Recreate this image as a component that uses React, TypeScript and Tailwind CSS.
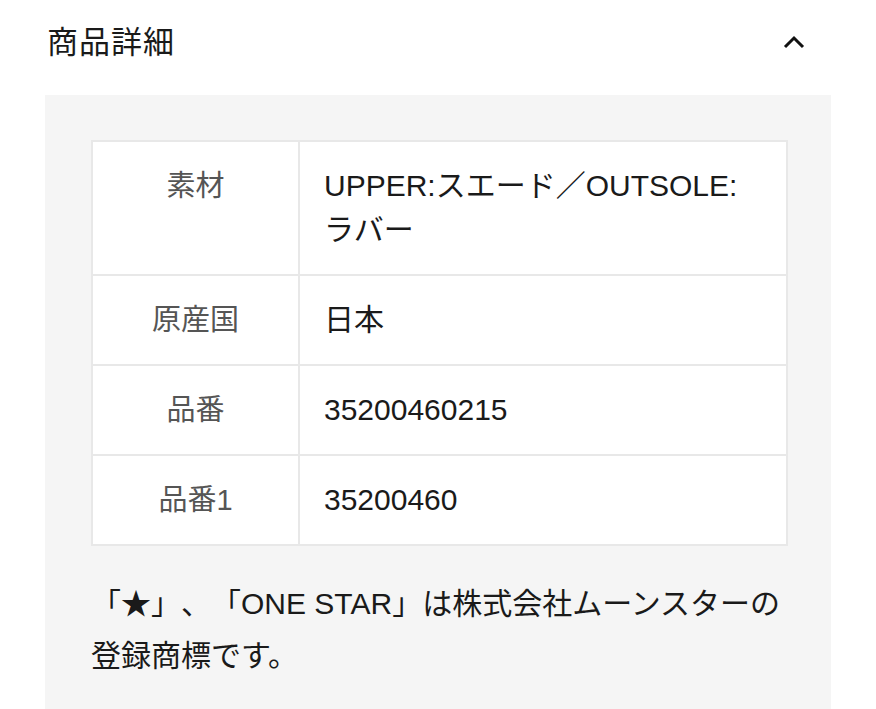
const rows: Array<{ label: string; value: string }> = [
  { label: '素材', value: 'UPPER:スエード／OUTSOLE:ラバー' },
  { label: '原産国', value: '日本' },
  { label: '品番', value: '35200460215' },
  { label: '品番1', value: '35200460' },
]

export default function App() {
  return (
    <div
      className="w-[876px] h-[709px] overflow-hidden bg-white px-[45px] [text-spacing-trim:space-all]"
      style={{ fontFamily: '"Liberation Sans", "Noto Sans CJK JP", sans-serif' }}
    >
      <div className="flex items-center justify-between h-[95px] pl-[2px] pb-[11px]">
        <h2 className="text-[31px] leading-none text-[#1a1a1a] tracking-[1px]">商品詳細</h2>
        <svg width="24" height="16" viewBox="0 0 24 16" className="mr-[25px]">
          <path d="M3 13 L12 4 L21 13" fill="none" stroke="#111" strokeWidth="3" />
        </svg>
      </div>

      <div className="bg-[#f5f5f5] pt-[45px] pl-[46px] pr-[43px] pb-[60px]">
        <table className="w-full border-collapse bg-white border-2 border-[#e8e8e8]">
          <tbody>
            {rows.map((row) => (
              <tr key={row.label} className="border-b-2 border-[#e8e8e8]">
                <td className="w-[207px] align-top text-center border-r-2 border-[#e8e8e8] py-[22px] text-[29px] leading-[44px] text-[#555]">
                  {row.label}
                </td>
                <td className="align-top py-[22px] pl-[24px] pr-[30px] text-[30px] leading-[44px] text-[#1a1a1a]">
                  {row.value}
                </td>
              </tr>
            ))}
          </tbody>
        </table>

        <p className="mt-[32px] mr-[-10px] text-[30px] leading-[52px] text-[#1a1a1a]">
          「★」、「ONE STAR」は株式会社ムーンスターの登録商標です。
        </p>
      </div>
    </div>
  )
}
